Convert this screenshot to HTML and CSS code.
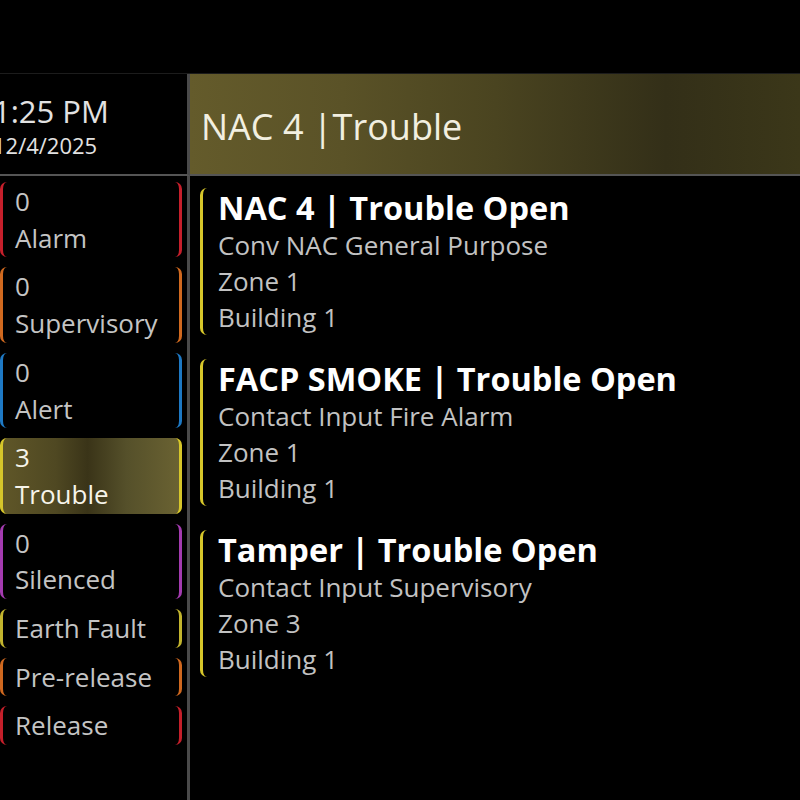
FILE: index.html
```html
<!DOCTYPE html>
<html lang="en">
<head>
<meta charset="utf-8">
<title>Panel</title>
<link rel="stylesheet" href="styles.css">
</head>
<body>
<div class="screen">
  <div class="topbar"></div>
  <div class="layout">
    <div class="clock">
      <div class="clock-text">
        <div class="time">1:25 PM</div>
        <div class="date">12/4/2025</div>
      </div>
    </div>
    <div class="banner"><span class="banner-text">NAC 4 |Trouble</span></div>
    <div class="sidebar">
      <div class="cat cat-alarm"><div>0</div><div>Alarm</div></div>
      <div class="cat cat-super"><div>0</div><div>Supervisory</div></div>
      <div class="cat cat-alert"><div>0</div><div>Alert</div></div>
      <div class="cat cat-trouble active"><div>3</div><div>Trouble</div></div>
      <div class="cat cat-silenced"><div>0</div><div>Silenced</div></div>
      <div class="cat cat-earth"><div>Earth Fault</div></div>
      <div class="cat cat-pre"><div>Pre-release</div></div>
      <div class="cat cat-release"><div>Release</div></div>
    </div>
    <div class="events">
      <div class="event">
        <div class="event-title">NAC 4 | Trouble Open</div>
        <div class="event-line">Conv NAC General Purpose</div>
        <div class="event-line">Zone 1</div>
        <div class="event-line">Building 1</div>
      </div>
      <div class="event">
        <div class="event-title">FACP SMOKE | Trouble Open</div>
        <div class="event-line">Contact Input Fire Alarm</div>
        <div class="event-line">Zone 1</div>
        <div class="event-line">Building 1</div>
      </div>
      <div class="event">
        <div class="event-title">Tamper | Trouble Open</div>
        <div class="event-line">Contact Input Supervisory</div>
        <div class="event-line">Zone 3</div>
        <div class="event-line">Building 1</div>
      </div>
    </div>
  </div>
</div>
</body>
</html>
```

FILE: styles.css
```css
* { box-sizing: border-box; }
html, body {
  margin: 0;
  padding: 0;
  background: #000;
}
body {
  font-family: "Open Sans", "Noto Sans", "DejaVu Sans", sans-serif;
  color: #c8c8c8;
  width: 800px;
  height: 800px;
  overflow: hidden;
}
.screen {
  width: 800px;
  height: 800px;
  display: flex;
  flex-direction: column;
}
.topbar {
  height: 74px;
  flex: none;
  border-bottom: 1px solid #1c1c1c;
}
.layout {
  flex: 1;
  display: grid;
  grid-template-columns: 190px 1fr;
  grid-template-rows: 102px 1fr;
  min-height: 0;
}
.clock {
  border-right: 3px solid #4a4a4a;
  border-bottom: 2px solid #555;
  padding-top: 19px;
  overflow: hidden;
}
.clock-text {
  margin-left: -7px;
  color: #e2e2e2;
}
.time {
  font-size: 31px;
  line-height: 37px;
  white-space: nowrap;
}
.date {
  font-size: 22px;
  line-height: 30px;
  white-space: nowrap;
}
.banner {
  border-bottom: 2px solid #555;
  background: linear-gradient(90deg, #645b2b 0%, #5a5227 25%, #4a4420 50%, #332f18 78%, #3b3719 100%);
  display: flex;
  align-items: center;
  padding: 5px 0 0 11px;
}
.banner-text {
  font-size: 36px;
  line-height: 48px;
  color: #f2efe0;
  white-space: nowrap;
}
.sidebar {
  border-right: 3px solid #4a4a4a;
  padding: 6px 5px 0 0;
  display: flex;
  flex-direction: column;
  gap: 10px;
}
.cat {
  border-left: 3px solid;
  border-right: 3px solid;
  border-radius: 7px;
  padding: 1px 8px 1px 12px;
  font-size: 26px;
  line-height: 36.7px;
  color: #c4c4c4;
  white-space: nowrap;
}
.cat-alarm { border-color: #c61f2b; }
.cat-super { border-color: #d0691f; }
.cat-alert { border-color: #1e79c4; }
.cat-trouble { border-color: #d6c62a; }
.cat-silenced { border-color: #a43bb0; }
.cat-earth { border-color: #c2b42e; }
.cat-pre { border-color: #cf681f; }
.cat-release { border-color: #c41f2a; }
.cat.active {
  background: linear-gradient(90deg, #5f5628 0%, #4f4822 30%, #3a3418 48%, #55502a 70%, #6a6232 100%);
  color: #f6f4ea;
}
.events {
  padding: 12px 0 0 10px;
  display: flex;
  flex-direction: column;
  gap: 24px;
}
.event {
  border-left: 3px solid #d6c62a;
  border-radius: 7px 0 0 7px;
  padding-left: 15px;
}
.event-title {
  font-size: 32.5px;
  font-weight: 700;
  line-height: 39px;
  color: #fff;
  white-space: nowrap;
}
.event-line {
  font-size: 26px;
  line-height: 36px;
  color: #c2c2c2;
  white-space: nowrap;
}
```
